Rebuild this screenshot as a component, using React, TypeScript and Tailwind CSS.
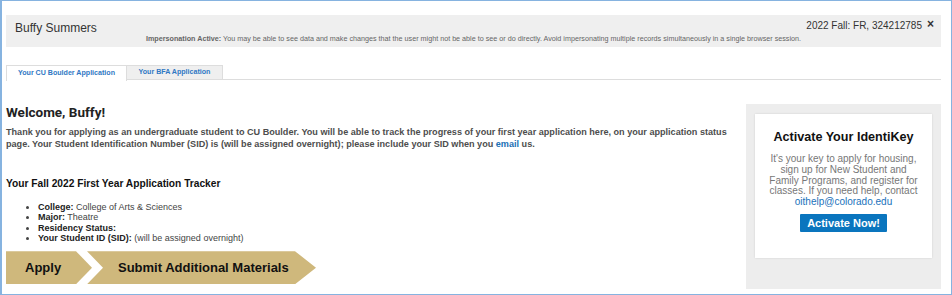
export default function App() {
  const facts = [
    { label: 'College:', value: 'College of Arts & Sciences' },
    { label: 'Major:', value: 'Theatre' },
    { label: 'Residency Status:', value: '' },
    { label: 'Your Student ID (SID):', value: '(will be assigned overnight)' },
  ];

  return (
    <div className="w-[952px] h-[295px] overflow-hidden bg-white border border-l-2 border-[#86b3e0] font-['Liberation_Sans',Arial,sans-serif] text-[#333]">
      <div className="pl-[4px] pr-[10px] pt-[14px]">
        {/* Impersonation header */}
        <div className="h-[32px] bg-[#efefef] relative">
          <div className="absolute left-[9px] top-[4px] text-[12px] text-[#333]">Buffy Summers</div>
          <div className="absolute right-[7px] top-[3px] flex items-center gap-[5px] text-[10px] text-[#333]">
            <span>2022 Fall: FR, 324212785</span>
            <span className="text-[12px] font-bold leading-none -mt-[3px]">×</span>
          </div>
          <div className="absolute left-0 right-0 top-[19px] text-center text-[7.2px] text-[#666]">
            <span className="font-bold">Impersonation Active:</span> You may be able to see data and make changes that the user might not be able to see or do directly. Avoid impersonating multiple records simultaneously in a single browser session.
          </div>
        </div>

        {/* Tabs */}
        <div className="mt-[18px] flex border-b border-[#ddd] h-[15px]">
          <div className="w-[121px] border border-b-0 border-[#ddd] bg-white text-[7.1px] font-bold text-[#2f78c4] flex items-center justify-center -mb-px h-[16px]">
            Your CU Boulder Application
          </div>
          <div className="w-[96px] border border-l-0 border-[#ddd] bg-[#efefef] text-[7.1px] font-bold text-[#2f78c4] flex items-center justify-center h-[15px]">
            Your BFA Application
          </div>
        </div>

        <div className="flex mt-[24px]">
          {/* Main column */}
          <div className="flex-1 pr-[12px]">
            <h2 className="font-['Roboto',Arial,sans-serif] text-[13.5px] font-bold text-[#222] leading-[16px]">Welcome, Buffy!</h2>
            <p className="mt-[6px] text-[9.1px] font-bold text-[#4d4d4d] leading-[12px]">
              Thank you for applying as an undergraduate student to CU Boulder. You will be able to track the progress of your first year application here, on your application status page. Your Student Identification Number (SID) is (will be assigned overnight); please include your SID when you <span className="text-[#1a6fb5]">email</span> us.
            </p>
            <h3 className="mt-[27px] text-[10.2px] font-bold text-[#111] leading-[14px]">Your Fall 2022 First Year Application Tracker</h3>
            <ul className="mt-[11px] pl-[32px] list-disc text-[9px] leading-[10.3px] text-[#444]">
              {facts.map((f) => (
                <li key={f.label}>
                  <span className="font-bold text-[#222]">{f.label}</span>
                  {f.value && <span> {f.value}</span>}
                </li>
              ))}
            </ul>
            {/* Progress chevrons */}
            <div className="mt-[8px] flex h-[33px]">
              <div className="w-[86px] bg-[#cfb87c] [clip-path:polygon(0_0,calc(100%-16px)_0,100%_50%,calc(100%-16px)_100%,0_100%)] flex items-center pl-[19px] text-[13px] font-bold text-[#111]">
                Apply
              </div>
              <div className="-ml-[5px] w-[229px] bg-[#cfb87c] [clip-path:polygon(0_0,calc(100%-21px)_0,100%_50%,calc(100%-21px)_100%,0_100%,16px_50%)] flex items-center pl-[31px] text-[13px] font-bold text-[#111]">
                Submit Additional Materials
              </div>
            </div>
          </div>

          {/* Sidebar */}
          <div className="w-[195px] h-[185px] bg-[#ededed] px-[9px] pt-[10px]">
            <div className="bg-white shadow-[0_0_2px_rgba(0,0,0,0.12)] h-[144px] flex flex-col items-center pt-[15px]">
              <h4 className="text-[12.6px] font-bold text-[#111] leading-[16px]">Activate Your IdentiKey</h4>
              <p className="mt-[9px] w-[152px] text-center text-[10px] leading-[10.75px] text-[#777]">
                It's your key to apply for housing, sign up for New Student and Family Programs, and register for classes. If you need help, contact <span className="text-[#1a72bb]">oithelp@colorado.edu</span>
              </p>
              <button className="mt-[6px] h-[18px] w-[87px] bg-[#0a75be] text-white text-[11px] font-bold rounded-[1px]">
                Activate Now!
              </button>
            </div>
          </div>
        </div>
      </div>
    </div>
  );
}
